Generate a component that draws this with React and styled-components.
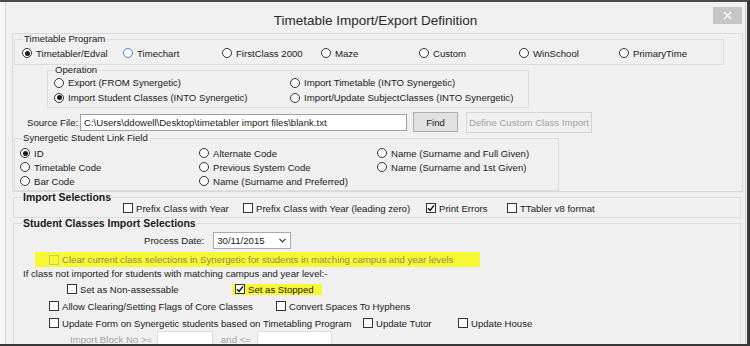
import React from "react";
import styled, { createGlobalStyle } from "styled-components";

const Global = createGlobalStyle`
  html, body { margin: 0; padding: 0; background: #f0f0f0; }
  body { font-family: "Liberation Sans", Arial, sans-serif; }
  *, *::before, *::after { box-sizing: border-box; }
`;

const Frame = styled.div`
  width: 750px;
  height: 346px;
  overflow: hidden;
  background: #f6f6f6;
  border-top: 2px solid #4b4b4b;
  border-bottom: 2px solid #383838;
  border-right: 3px solid #383838;
  display: flex;
`;

const Window = styled.div`
  margin-left: 5px;
  width: 741px;
  border-left: 1px solid #d6d6d6;
  border-right: 1px solid #d0d0d0;
  background: #f0f0f0;
  display: flex;
  flex-direction: column;
  overflow: hidden;
  font-size: 9.6px;
  color: #1a1a1a;
`;

const TitleBar = styled.div`
  height: 31px;
  flex: none;
  display: grid;
  grid-template-columns: 1fr auto 1fr;
  background: #f1f1f1;
`;

const Title = styled.div`
  grid-column: 2;
  padding-top: 11px;
  font-size: 13.5px;
  line-height: 16px;
  color: #2a2a2a;
  white-space: nowrap;
`;

const CloseBtn = styled.div`
  grid-column: 3;
  justify-self: end;
  margin: 5px 3px 0 0;
  width: 29px;
  height: 17px;
  background: #c6c6c6;
  display: flex;
  align-items: center;
  justify-content: center;
`;

const Body = styled.div`
  padding: 0 2px 0 6px;
  display: flex;
  flex-direction: column;
`;

const Panel = styled.div`
  border: 1px solid #d9d9d9;
  display: flex;
  flex-direction: column;
  align-items: flex-start;
`;

const Group = styled.fieldset`
  margin: ${(p) => `${p.$mt || 0}px ${p.$mr || 0}px 0 ${p.$ml || 0}px`};
  padding: 0;
  min-width: 0;
  width: ${(p) => (p.$w ? `${p.$w}px` : "auto")};
  align-self: ${(p) => (p.$w ? "flex-start" : "stretch")};
  border: 1px solid #dcdcdc;
`;

const Legend = styled.legend`
  margin-left: ${(p) => p.$ml}px;
  padding: 0 1px;
  line-height: 10px;
  font-size: ${(p) => (p.$bold ? "10.5px" : "9.6px")};
  font-weight: ${(p) => (p.$bold ? 700 : 400)};
  color: #1a1a1a;
  white-space: nowrap;
`;

const GroupBody = styled.div`
  padding: ${(p) => `${p.$pt || 0}px 0 ${p.$pb || 0}px ${p.$pl || 0}px`};
  display: flex;
  flex-direction: column;
`;

const Row = styled.div`
  display: flex;
  align-items: center;
  height: ${(p) => p.$h}px;
  margin-top: ${(p) => p.$mt || 0}px;
  margin-left: ${(p) => p.$ml || 0}px;
  gap: ${(p) => p.$gap || 0}px;
  white-space: nowrap;
`;

const Item = styled.label`
  display: flex;
  align-items: center;
  width: ${(p) => (p.$w ? `${p.$w}px` : "auto")};
  flex: none;
  white-space: nowrap;
  color: ${(p) => (p.$muted ? "#8c8c55" : "#1a1a1a")};
`;

const RadioCircle = styled.span`
  width: 10px;
  height: 10px;
  flex: none;
  border-radius: 50%;
  border: 1px solid ${(p) => (p.$hover ? "#3d86c6" : "#333")};
  background: #fff;
  margin-right: 4px;
  display: flex;
  align-items: center;
  justify-content: center;
  &::after {
    content: "";
    width: 5px;
    height: 5px;
    border-radius: 50%;
    background: ${(p) => (p.$checked ? "#1a1a1a" : "transparent")};
  }
`;

const Box = styled.span`
  width: 10px;
  height: 10px;
  flex: none;
  border: 1px solid ${(p) => (p.$disabled ? "#caca6a" : "#333")};
  background: ${(p) => (p.$disabled ? "transparent" : "#fff")};
  margin-right: 3px;
  display: flex;
  align-items: center;
  justify-content: center;
`;

const Highlight = styled.div`
  display: flex;
  align-items: center;
  background: #f7f735;
  width: ${(p) => p.$w}px;
  height: ${(p) => p.$h}px;
  margin-left: ${(p) => p.$ml || 0}px;
  padding-left: ${(p) => p.$pl || 0}px;
  margin-top: ${(p) => p.$mt || 0}px;
  flex: none;
`;

const FieldLabel = styled.span`
  color: ${(p) => (p.$disabled ? "#a3a3a3" : "#1a1a1a")};
  width: ${(p) => (p.$w ? `${p.$w}px` : "auto")};
  margin-left: ${(p) => p.$ml || 0}px;
  flex: none;
`;

const TextInput = styled.div`
  width: ${(p) => p.$w}px;
  height: ${(p) => p.$h}px;
  background: #fff;
  border: 1px solid ${(p) => (p.$disabled ? "#dedede" : "#a0a0a0")};
  padding-left: 3px;
  display: flex;
  align-items: center;
  flex: none;
  overflow: hidden;
`;

const Button = styled.div`
  height: ${(p) => p.$h}px;
  width: ${(p) => p.$w}px;
  margin-left: ${(p) => p.$ml || 0}px;
  display: flex;
  align-items: center;
  justify-content: center;
  background: ${(p) => (p.$disabled ? "#f0f0f0" : "#e1e1e1")};
  border: 1px solid ${(p) => (p.$disabled ? "#d4d4d4" : "#adadad")};
  color: ${(p) => (p.$disabled ? "#a3a3a3" : "#1a1a1a")};
  flex: none;
`;

const Combo = styled.div`
  width: 78px;
  height: 17px;
  background: #fff;
  border: 1px solid #a9a9a9;
  display: flex;
  align-items: center;
  justify-content: space-between;
  padding: 0 4px 0 3px;
  flex: none;
`;

const Para = styled.div`
  height: ${(p) => p.$h}px;
  margin-left: ${(p) => p.$ml}px;
  display: flex;
  align-items: center;
  white-space: nowrap;
`;

const Radio = ({ label, checked, hover, w }) => (
  <Item $w={w}>
    <RadioCircle $checked={checked} $hover={hover} />
    {label}
  </Item>
);

const Check = ({ label, checked, disabled, w }) => (
  <Item $w={w} $muted={disabled}>
    <Box $disabled={disabled}>
      {checked && (
        <svg width="8" height="8" viewBox="0 0 8 8">
          <path d="M1 4.2 L3.1 6.4 L7 1.4" stroke="#111" strokeWidth="1.5" fill="none" />
        </svg>
      )}
    </Box>
    {label}
  </Item>
);

export default function App() {
  return (
    <>
      <Global />
      <Frame>
        <Window>
          <TitleBar>
            <Title>Timetable Import/Export Definition</Title>
            <CloseBtn>
              <svg width="9" height="9" viewBox="0 0 9 9">
                <path d="M1 1 L8 8 M8 1 L1 8" stroke="#fff" strokeWidth="1.3" />
              </svg>
            </CloseBtn>
          </TitleBar>
          <Body>
            <Panel>
              <Group $ml={1} $w={710}>
                <Legend $ml={8}>Timetable Program</Legend>
                <GroupBody $pt={1} $pb={3}>
                  <Row $h={16} $ml={7}>
                    <Radio w={101} checked label="Timetabler/Edval" />
                    <Radio w={99} hover label="Timechart" />
                    <Radio w={99} label="FirstClass 2000" />
                    <Radio w={98} label="Maze" />
                    <Radio w={100} label="Custom" />
                    <Radio w={100} label="WinSchool" />
                    <Radio label="PrimaryTime" />
                  </Row>
                </GroupBody>
              </Group>
              <Group $ml={34} $w={482}>
                <Legend $ml={6}>Operation</Legend>
                <GroupBody $pb={2}>
                  <Row $h={15} $ml={6}>
                    <Radio w={236} label="Export (FROM Synergetic)" />
                    <Radio label="Import Timetable (INTO Synergetic)" />
                  </Row>
                  <Row $h={15} $ml={6}>
                    <Radio w={236} checked label="Import Student Classes (INTO Synergetic)" />
                    <Radio label="Import/Update SubjectClasses (INTO Synergetic)" />
                  </Row>
                </GroupBody>
              </Group>
              <Row $h={20} $mt={4} $ml={14}>
                <FieldLabel $w={53}>Source File:</FieldLabel>
                <TextInput $w={327} $h={17}>
                  C:\Users\ddowell\Desktop\timetabler import files\blank.txt
                </TextInput>
                <Button $w={45} $h={20} $ml={6}>
                  Find
                </Button>
                <Button $w={126} $h={21} $ml={8} $disabled>
                  Define Custom Class Import
                </Button>
              </Row>
              <Group $ml={1} $mt={1} $w={545}>
                <Legend $ml={7}>Synergetic Student Link Field</Legend>
                <GroupBody $pt={3} $pb={2}>
                  <Row $h={14} $ml={5}>
                    <Radio w={179} checked label="ID" />
                    <Radio w={178} label="Alternate Code" />
                    <Radio label="Name (Surname and Full Given)" />
                  </Row>
                  <Row $h={14} $ml={5}>
                    <Radio w={179} label="Timetable Code" />
                    <Radio w={178} label="Previous System Code" />
                    <Radio label="Name (Surname and 1st Given)" />
                  </Row>
                  <Row $h={14} $ml={5}>
                    <Radio w={179} label="Bar Code" />
                    <Radio w={178} label="Name (Surname and Preferred)" />
                  </Row>
                </GroupBody>
              </Group>
            </Panel>
            <Group $ml={1} $mr={2}>
              <Legend $ml={8} $bold>
                Import Selections
              </Legend>
              <GroupBody $pb={3}>
                <Row $h={12} $ml={109}>
                  <Check w={120} label="Prefix Class with Year" />
                  <Check w={183} label="Prefix Class with Year (leading zero)" />
                  <Check w={81} checked label="Print Errors" />
                  <Check label="TTabler v8 format" />
                </Row>
              </GroupBody>
            </Group>
            <Group $ml={1} $mr={2}>
              <Legend $ml={8} $bold>
                Student Classes Import Selections
              </Legend>
              <GroupBody $pb={12}>
                <Row $h={17} $mt={4} $ml={130} $gap={9}>
                  <FieldLabel>Process Date:</FieldLabel>
                  <Combo>
                    <span>30/11/2015</span>
                    <svg width="7" height="5" viewBox="0 0 7 5">
                      <path d="M0.5 0.8 L3.5 3.8 L6.5 0.8" stroke="#333" strokeWidth="1.2" fill="none" />
                    </svg>
                  </Combo>
                </Row>
                <Highlight $w={445} $h={15} $ml={21} $pl={14} $mt={3}>
                  <Check
                    disabled
                    label="Clear current class selections in Synergetic for students in matching campus and year levels"
                  />
                </Highlight>
                <Para $h={13} $ml={9}>
                  If class not imported for students with matching campus and year level:-
                </Para>
                <Row $h={14} $mt={2} $ml={53}>
                  <Check w={165} label="Set as Non-assessable" />
                  <Highlight $w={90} $h={11} $pl={3}>
                    <Check checked label="Set as Stopped" />
                  </Highlight>
                </Row>
                <Row $h={14} $mt={3} $ml={35}>
                  <Check w={227} label="Allow Clearing/Setting Flags of Core Classes" />
                  <Check label="Convert Spaces To Hyphens" />
                </Row>
                <Row $h={14} $mt={3} $ml={35}>
                  <Check w={314} label="Update Form on Synergetic students based on Timetabling Program" />
                  <Check w={95} label="Update Tutor" />
                  <Check label="Update House" />
                </Row>
                <Row $h={15} $mt={2} $ml={56}>
                  <FieldLabel $disabled $w={87}>
                    Import Block No &gt;=
                  </FieldLabel>
                  <TextInput $w={56} $h={17} $disabled />
                  <FieldLabel $disabled $w={36} $ml={8}>
                    and &lt;=
                  </FieldLabel>
                  <TextInput $w={75} $h={17} $disabled />
                </Row>
              </GroupBody>
            </Group>
          </Body>
        </Window>
      </Frame>
    </>
  );
}
